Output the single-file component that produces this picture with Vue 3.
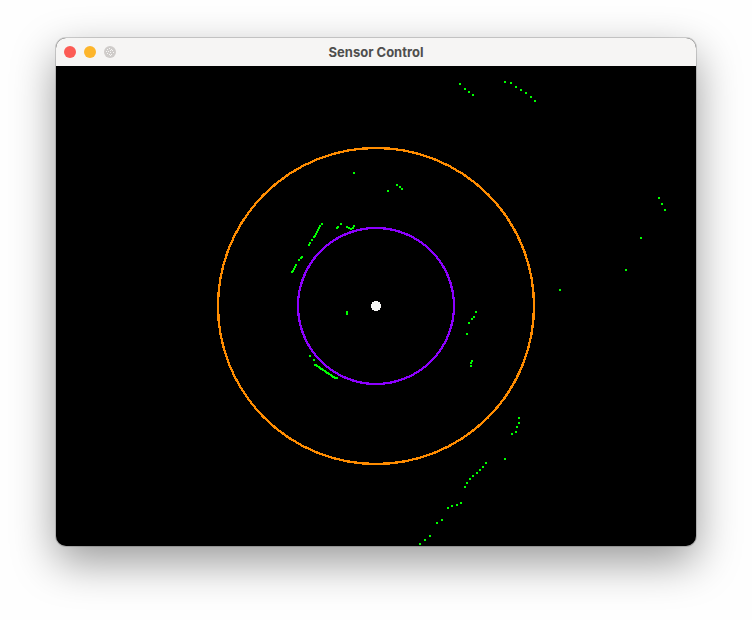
<script setup>
const title = 'Sensor Control'

const rings = [
  { name: 'outer', radius: 158 },
  { name: 'inner', radius: 78 },
]

// Top-left corner of each echo, in canvas units
const echoes = [
  [403, 17], [408, 22], [412, 25], [416, 28],
  [448, 15], [454, 16], [459, 20], [464, 23], [469, 26], [474, 30], [478, 34],
  [297, 106], [331, 124], [340, 118], [343, 120], [345, 122],
  [265, 157], [263, 159], [262, 161], [261, 163], [260, 165], [259, 167], [258, 169], [257, 170],
  [255, 173], [253, 176], [252, 178],
  [284, 157], [281, 160], [280, 161],
  [290, 160], [292, 161], [294, 162], [296, 161], [297, 159],
  [245, 190], [244, 191], [242, 193],
  [239, 198], [238, 200], [237, 202], [236, 204], [235, 205],
  [290, 245], [290, 247],
  [253, 289], [257, 293],
  [258, 298], [260, 299], [262, 300], [264, 302], [266, 303], [268, 304],
  [270, 306], [272, 307], [274, 308], [276, 310], [278, 311], [280, 311],
  [259, 298], [263, 301], [265, 302], [269, 305], [271, 306], [275, 309], [277, 310],
  [419, 245], [417, 250], [415, 252], [412, 256], [410, 267],
  [415, 294], [414, 296], [414, 299],
  [602, 131], [605, 137], [608, 143], [584, 171], [569, 203], [503, 223],
  [462, 351], [462, 356], [460, 360], [459, 365], [455, 367], [448, 392],
  [429, 396], [426, 400], [423, 403], [420, 406], [416, 409], [413, 412], [410, 416], [408, 420],
  [404, 436], [400, 438], [395, 439], [391, 441],
  [385, 453], [380, 456], [373, 469], [368, 473], [363, 477],
]
</script>

<template>
  <main class="desktop">
    <section class="window">
      <header class="titlebar">
        <div class="controls">
          <button class="control close" type="button" aria-label="Close"></button>
          <button class="control minimize" type="button" aria-label="Minimize"></button>
          <button class="control zoom" type="button" aria-label="Zoom" disabled>
            <svg class="grain" viewBox="0 0 12 12" aria-hidden="true" shape-rendering="crispEdges">
              <path
                d="M5 2h1v1h-1z M7 3h1v1h-1z M3 3h1v1h-1z M6 4h1v1h-1z M8 4h1v1h-1z M4 5h1v1h-1z M2 5h1v1h-1z M6 6h1v1h-1z M9 6h1v1h-1z M3 7h1v1h-1z M5 8h1v1h-1z M7 8h1v1h-1z M6 9h1v1h-1z"
              />
            </svg>
          </button>
        </div>
        <h1 class="title">{{ title }}</h1>
      </header>
      <svg class="scope" viewBox="0 0 640 480" shape-rendering="crispEdges" role="img" :aria-label="title">
        <circle
          v-for="ring in rings"
          :key="ring.name"
          :class="['ring', ring.name]"
          cx="320"
          cy="240"
          :r="ring.radius"
        />
        <circle class="origin" cx="320" cy="240" r="5" />
        <rect
          v-for="([x, y], i) in echoes"
          :key="i"
          class="echo"
          :x="x"
          :y="y"
          width="2"
          height="2"
        />
      </svg>
    </section>
  </main>
</template>

<style>
body {
  background: #fefefe;
}
</style>

<style scoped>
.desktop {
  box-sizing: border-box;
  min-height: 100vh;
  padding: 38px 56px 74px;
}

.window {
  overflow: hidden;
  border-radius: 10px;
  background: #000;
  box-shadow:
    0 0 0 1px rgba(0, 0, 0, 0.16),
    0 16px 44px rgba(0, 0, 0, 0.4);
}

.titlebar {
  display: grid;
  grid-template-columns: 1fr auto 1fr;
  align-items: center;
  height: 28px;
  padding: 0 8px;
  background: #f6f5f4;
}

.controls {
  display: flex;
  gap: 8px;
}

.control {
  width: 12px;
  height: 12px;
  padding: 0;
  border: 0;
  border-radius: 50%;
}

.close {
  background: #fc5b54;
}

.minimize {
  background: #fdb52b;
}

.zoom {
  background: #cfccca;
}

.grain {
  display: block;
  width: 12px;
  height: 12px;
  fill: #f6f5f4;
}

.title {
  margin: 0;
  color: #4f4e4d;
  font: 700 13px/18px Inter, "Liberation Sans", sans-serif;
}

.scope {
  display: block;
  width: 100%;
  height: auto;
}

.ring {
  fill: none;
  stroke-width: 2.3;
}

.outer {
  stroke: #ff8c00;
}

.inner {
  stroke: #8c00ff;
}

.origin {
  fill: #f6f5f4;
}

.echo {
  fill: #0f0;
}
</style>
